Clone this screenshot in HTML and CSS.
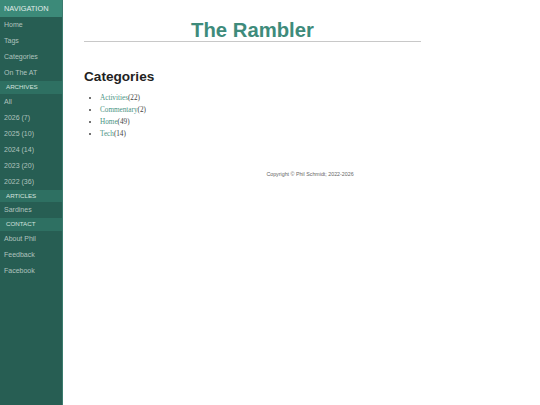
FILE: index.html
```html
<!DOCTYPE html>
<html>
<head>
<meta charset="utf-8">
<title>The Rambler</title>
<link rel="stylesheet" href="styles.css">
</head>
<body>
<div class="layout">
  <nav class="sidebar">
    <div class="nav-title">NAVIGATION</div>
    <a class="nav-item" href="#">Home</a>
    <a class="nav-item" href="#">Tags</a>
    <a class="nav-item" href="#">Categories</a>
    <a class="nav-item" href="#">On The AT</a>
    <div class="nav-section">ARCHIVES</div>
    <a class="nav-item" href="#">All</a>
    <a class="nav-item" href="#">2026 (7)</a>
    <a class="nav-item" href="#">2025 (10)</a>
    <a class="nav-item" href="#">2024 (14)</a>
    <a class="nav-item" href="#">2023 (20)</a>
    <a class="nav-item" href="#">2022 (36)</a>
    <div class="nav-section">ARTICLES</div>
    <a class="nav-item" href="#">Sardines</a>
    <div class="nav-section">CONTACT</div>
    <a class="nav-item" href="#">About Phil</a>
    <a class="nav-item" href="#">Feedback</a>
    <a class="nav-item" href="#">Facebook</a>
  </nav>
  <main class="main">
    <div class="content">
      <header class="site-header">
        <h1 class="site-title">The Rambler</h1>
      </header>
      <h2 class="page-title">Categories</h2>
      <ul class="cat-list">
        <li><a href="#">Activities</a>(22)</li>
        <li><a href="#">Commentary</a>(2)</li>
        <li><a href="#">Home</a>(49)</li>
        <li><a href="#">Tech</a>(14)</li>
      </ul>
    </div>
    <footer class="footer">Copyright © Phil Schmidt; 2022-2026</footer>
  </main>
</div>
</body>
</html>
```

FILE: styles.css
```css
html, body {
  margin: 0;
  padding: 0;
  background: #ffffff;
}

.layout {
  display: flex;
  min-height: 405px;
}

.sidebar {
  width: 62px;
  flex: none;
  background: #275e53;
  border-right: 1px solid #3b7c6f;
  display: flex;
  flex-direction: column;
  font-family: "Liberation Sans", Arial, sans-serif;
}

.nav-title {
  height: 17px;
  line-height: 17px;
  padding-left: 4px;
  background: #3c8a79;
  color: #e2ece9;
  font-size: 7.4px;
}

.nav-item {
  display: block;
  height: 16px;
  line-height: 16px;
  padding-left: 4px;
  color: #afc3be;
  font-size: 7px;
  text-decoration: none;
}

.nav-section {
  height: 12.5px;
  line-height: 12.5px;
  padding-left: 6px;
  background: #2e7062;
  color: #d3e2de;
  font-size: 6.2px;
}

.main {
  flex: 1;
  padding-left: 21px;
  padding-right: 4px;
}

.content {
  width: 337px;
}

.site-header {
  border-bottom: 1px solid #c8c8c8;
  padding-top: 20px;
  text-align: center;
}

.site-title {
  margin: 0;
  font-family: "Liberation Sans", Arial, sans-serif;
  font-size: 20.3px;
  font-weight: bold;
  line-height: 21px;
  color: #3e8b7b;
}

.page-title {
  margin: 27px 0 0 0;
  font-family: "Liberation Sans", Arial, sans-serif;
  font-size: 13.6px;
  font-weight: bold;
  line-height: 16px;
  color: #222222;
}

.cat-list {
  margin: 7px 0 0 0;
  padding-left: 16px;
  font-family: "Liberation Serif", Georgia, serif;
  font-size: 7.2px;
  line-height: 12px;
  color: #444444;
}

.cat-list li::marker {
  font-size: 7px;
}

.cat-list a {
  color: #4a9484;
  text-decoration: none;
}

.footer {
  margin-top: 31px;
  text-align: center;
  font-family: "Liberation Sans", Arial, sans-serif;
  font-size: 5.3px;
  color: #666666;
}
```
